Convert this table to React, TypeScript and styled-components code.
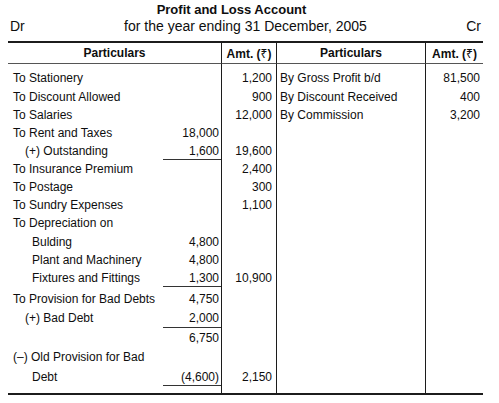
import React from 'react';
import styled, { createGlobalStyle } from 'styled-components';

const GlobalStyle = createGlobalStyle`
  html, body {
    margin: 0;
    padding: 0;
    background: #ffffff;
  }
  body {
    font-family: "Liberation Sans", Arial, "Noto Sans", "DejaVu Sans", sans-serif;
    color: #0e0e0e;
  }
`;

const Page = styled.div`
  width: 475px;
  padding: 0 0 0 8px;
`;

const Title = styled.div`
  margin-top: 2px;
  padding-right: 28px;
  text-align: center;
  font-size: 13px;
  font-weight: bold;
  line-height: 16px;
`;

const SubRow = styled.div`
  display: flex;
  justify-content: space-between;
  align-items: center;
  height: 16px;
  font-size: 14px;
  line-height: 16px;
  padding: 0 2px 0 2px;
  margin-bottom: 7px;
`;

const Ledger = styled.table`
  width: 475px;
  table-layout: fixed;
  border-collapse: separate;
  border-spacing: 0;
  font-size: 12px;
`;

const HeadCell = styled.th<{ $line?: boolean }>`
  height: 20px;
  padding: 0;
  font-weight: bold;
  font-size: 12px;
  text-align: center;
  border-top: 2px solid #1c1c1c;
  border-bottom: 1px solid #555;
  border-left: ${({ $line }) => ($line ? '1px solid #1c1c1c' : 'none')};
`;

const Rupee = styled.span`
  font-weight: normal;
  font-family: "Noto Sans", "DejaVu Sans", sans-serif;
  font-size: 12px;
`;

const Row = styled.tr<{ $h: number }>`
  height: ${({ $h }) => $h}px;
`;

const Label = styled.td<{ $indent: number; $pad?: boolean }>`
  padding: ${({ $pad }) => ($pad ? '2px' : '0')} 0 0 ${({ $indent }) => [5, 17, 24][$indent]}px;
  white-space: nowrap;
  vertical-align: middle;
`;

const Inner = styled.td<{ $under?: boolean; $pad?: boolean }>`
  padding: ${({ $pad }) => ($pad ? '2px' : '0')} 2px 0 0;
  text-align: right;
  vertical-align: middle;
  box-shadow: ${({ $under }) => ($under ? 'inset 0 -1px 0 #333' : 'none')};
`;

const Amount = styled.td<{ $right?: number; $pad?: boolean }>`
  padding: ${({ $pad }) => ($pad ? '2px' : '0')} ${({ $right }) => $right ?? 4}px 0 0;
  text-align: right;
  vertical-align: middle;
  border-left: 1px solid #1c1c1c;
`;

const Credit = styled.td<{ $pad?: boolean }>`
  padding: ${({ $pad }) => ($pad ? '2px' : '0')} 0 0 3px;
  white-space: nowrap;
  vertical-align: middle;
  border-left: 1px solid #1c1c1c;
`;

const Spacer = styled.td<{ $line?: boolean; $bottom?: boolean }>`
  padding: 0;
  border-left: ${({ $line }) => ($line ? '1px solid #1c1c1c' : 'none')};
  border-bottom: ${({ $bottom }) => ($bottom ? '2px solid #1c1c1c' : 'none')};
`;

type Entry = {
  label?: string;
  indent?: number;
  inner?: string;
  under?: boolean;
  amt?: string;
  rLabel?: string;
  rAmt?: string;
  tall?: boolean;
  gap?: boolean;
};

const rows: Entry[] = [
  { label: 'To Stationery', amt: '1,200', rLabel: 'By Gross Profit b/d', rAmt: '81,500' },
  { label: 'To Discount Allowed', amt: '900', rLabel: 'By Discount Received', rAmt: '400' },
  { label: 'To Salaries', amt: '12,000', rLabel: 'By Commission', rAmt: '3,200' },
  { label: 'To Rent and  Taxes', inner: '18,000' },
  { label: '(+) Outstanding', indent: 1, inner: '1,600', under: true, amt: '19,600' },
  { label: 'To Insurance Premium', amt: '2,400' },
  { label: 'To Postage', amt: '300' },
  { label: 'To Sundry Expenses', amt: '1,100' },
  { label: 'To Depreciation on' },
  { label: 'Bulding', indent: 2, inner: '4,800' },
  { label: 'Plant and Machinery', indent: 2, inner: '4,800' },
  { label: 'Fixtures and Fittings', indent: 2, inner: '1,300', under: true, amt: '10,900' },
  { label: 'To Provision for Bad Debts', inner: '4,750', tall: true, gap: true },
  { label: '(+) Bad Debt', indent: 1, inner: '2,000', under: true, tall: true },
  { inner: '6,750', tall: true },
  { label: '(–) Old Provision for Bad', tall: true },
  { label: 'Debt', indent: 2, inner: '(4,600)', under: true, amt: '2,150', tall: true },
];

const rowHeight = (r: Entry) => (r.gap ? 21.5 : r.tall ? 19.5 : 18.14);

const App: React.FC = () => {
  return (
    <Page>
      <GlobalStyle />
      <Title>Profit and Loss Account</Title>
      <SubRow>
        <span>Dr</span>
        <span>for the year ending 31 December, 2005</span>
        <span>Cr</span>
      </SubRow>

      <Ledger>
        <colgroup>
          <col style={{ width: 155 }} />
          <col style={{ width: 58 }} />
          <col style={{ width: 55 }} />
          <col style={{ width: 149 }} />
          <col style={{ width: 58 }} />
        </colgroup>
        <thead>
          <tr>
            <HeadCell colSpan={2}>Particulars</HeadCell>
            <HeadCell $line>
              Amt. (<Rupee>₹</Rupee>)
            </HeadCell>
            <HeadCell $line>Particulars</HeadCell>
            <HeadCell $line>
              Amt. (<Rupee>₹</Rupee>)
            </HeadCell>
          </tr>
        </thead>
        <tbody>
          <Row $h={5.4}>
            <Spacer colSpan={2} />
            <Spacer $line />
            <Spacer $line />
            <Spacer $line />
          </Row>
          {rows.map((r, i) => (
            <Row key={i} $h={rowHeight(r)}>
              <Label $indent={r.indent ?? 0} $pad={r.gap}>{r.label}</Label>
              <Inner $under={r.under} $pad={r.gap}>{r.inner}</Inner>
              <Amount $pad={r.gap}>{r.amt}</Amount>
              <Credit $pad={r.gap}>{r.rLabel}</Credit>
              <Amount $right={3} $pad={r.gap}>{r.rAmt}</Amount>
            </Row>
          ))}
          <Row $h={8.4}>
            <Spacer colSpan={2} $bottom />
            <Spacer $line $bottom />
            <Spacer $line $bottom />
            <Spacer $line $bottom />
          </Row>
        </tbody>
      </Ledger>
    </Page>
  );
};

export default App;
